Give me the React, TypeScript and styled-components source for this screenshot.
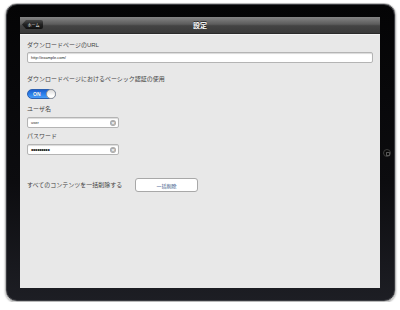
import React from "react";
import styled, { createGlobalStyle } from "styled-components";

const GlobalStyle = createGlobalStyle`
  html, body {
    margin: 0;
    padding: 0;
    background: #fff;
  }
  body {
    font-family: "Liberation Sans", "Noto Sans CJK JP", sans-serif;
  }
`;

const App: React.FC = () => {
  return (
    <>
      <GlobalStyle />
      <Frame>
        <HomeButton />
        <Screen>
          <NavBar>
            <BackButton>ホーム</BackButton>
            <NavTitle>設定</NavTitle>
          </NavBar>
          <Content>
            <Label>ダウンロードページのURL</Label>
            <Field $wide>
              <FieldText>http://example.com/</FieldText>
            </Field>

            <Label $gap={12}>ダウンロードページにおけるベーシック認証の使用</Label>
            <Toggle>
              <ToggleText>ON</ToggleText>
              <Knob />
            </Toggle>

            <Label $gap={6}>ユーザ名</Label>
            <Field>
              <FieldText>user</FieldText>
              <ClearIcon>×</ClearIcon>
            </Field>

            <Label $gap={4}>パスワード</Label>
            <Field>
              <FieldText $dots>•••••••••</FieldText>
              <ClearIcon>×</ClearIcon>
            </Field>

            <DeleteRow>
              <RowLabel>すべてのコンテンツを一括削除する</RowLabel>
              <DeleteButton>一括削除</DeleteButton>
            </DeleteRow>
          </Content>
        </Screen>
      </Frame>
    </>
  );
};
export default App;

//////////////////////////////////// frame

const Frame = styled.div`
  position: relative;
  box-sizing: border-box;
  width: 391px;
  height: 299px;
  margin: 3px 0 0 5px;
  padding: 13px 15px 13px 14px;
  border: 1px solid #b9b9b9;
  border-radius: 12px;
  background: linear-gradient(180deg, #040405 0%, #0c0c0f 60%, #1d1e24 100%);
  box-shadow: 0 1px 2px rgba(0, 0, 0, 0.35), inset 0 0 0 1px #3a3b40;
`;

const HomeButton = styled.div`
  position: absolute;
  right: 4px;
  top: 145px;
  width: 6px;
  height: 6px;
  border-radius: 50%;
  border: 1px solid #3c3c3c;
  background: #0a0a0a;
  &::after {
    content: "";
    position: absolute;
    left: 1.5px;
    top: 1.5px;
    width: 2px;
    height: 2px;
    border: 0.5px solid #555;
    border-radius: 0.5px;
  }
`;

const Screen = styled.div`
  display: flex;
  flex-direction: column;
  width: 100%;
  height: 100%;
  background: #e8e8e8;
  overflow: hidden;
`;

//////////////////////////////////// nav

const NavBar = styled.div`
  position: relative;
  display: flex;
  align-items: center;
  justify-content: center;
  height: 16px;
  flex-shrink: 0;
  background: linear-gradient(180deg, #858585 0%, #5c5c5c 45%, #434343 55%, #3a3a3a 100%);
  border-bottom: 1px solid #2a2a2a;
  box-shadow: 0 1px 0 #f4f4f4;
`;

const BackButton = styled.div`
  position: absolute;
  left: 2px;
  top: 3px;
  display: flex;
  align-items: center;
  justify-content: center;
  width: 21px;
  height: 9px;
  padding-left: 2px;
  box-sizing: border-box;
  font-size: 4px;
  color: #fff;
  background: linear-gradient(180deg, #4a4a4a 0%, #222 50%, #111 100%);
  clip-path: polygon(0 50%, 4px 0, 100% 0, 100% 100%, 4px 100%);
  border-radius: 0 2px 2px 0;
`;

const NavTitle = styled.div`
  font-size: 7px;
  font-weight: bold;
  color: #fff;
  text-shadow: 0 -1px 0 rgba(0, 0, 0, 0.6);
`;

//////////////////////////////////// content

const Content = styled.div`
  display: flex;
  flex-direction: column;
  align-items: flex-start;
  padding: 7px 7px 0 7px;
`;

const Label = styled.div<{ $gap?: number }>`
  margin-top: ${(p) => p.$gap ?? 0}px;
  font-size: 6px;
  line-height: 8px;
  color: #444;
  white-space: nowrap;
`;

const Field = styled.div<{ $wide?: boolean }>`
  display: flex;
  align-items: center;
  justify-content: space-between;
  box-sizing: border-box;
  width: ${(p) => (p.$wide ? "100%" : "92px")};
  height: 11px;
  margin-top: ${(p) => (p.$wide ? 3 : 4)}px;
  padding: 0 2px 0 3px;
  background: #fff;
  border: 1px solid #b4b4b4;
  border-radius: 2px;
  box-shadow: inset 0 1px 1px rgba(0, 0, 0, 0.15);
`;

const FieldText = styled.span<{ $dots?: boolean }>`
  font-size: ${(p) => (p.$dots ? "7px" : "4px")};
  line-height: 6px;
  letter-spacing: ${(p) => (p.$dots ? "-0.4px" : "0")};
  color: #222;
  white-space: nowrap;
`;

const ClearIcon = styled.span`
  display: flex;
  align-items: center;
  justify-content: center;
  width: 6px;
  height: 6px;
  border-radius: 50%;
  background: #a9a9a9;
  color: #fff;
  font-size: 6px;
  line-height: 6px;
  font-weight: bold;
`;

const Toggle = styled.div`
  position: relative;
  display: flex;
  align-items: center;
  box-sizing: border-box;
  width: 29px;
  height: 10px;
  margin-top: 6px;
  padding-left: 5px;
  border-radius: 5px;
  border: 1px solid #2a5fb0;
  background: linear-gradient(180deg, #1c5fcf 0%, #2f86f0 60%, #4b9cf5 100%);
`;

const ToggleText = styled.span`
  font-size: 5px;
  font-weight: bold;
  color: #fff;
  text-shadow: 0 -0.5px 0 rgba(0, 0, 0, 0.4);
`;

const Knob = styled.div`
  position: absolute;
  right: -1px;
  top: -1px;
  width: 10px;
  height: 10px;
  box-sizing: border-box;
  border-radius: 50%;
  border: 1px solid #9a9a9a;
  background: linear-gradient(180deg, #dcdcdc 0%, #fff 70%);
`;

const DeleteRow = styled.div`
  display: flex;
  align-items: center;
  margin-top: 23px;
`;

const RowLabel = styled.div`
  width: 108px;
  font-size: 6px;
  line-height: 8px;
  color: #444;
  white-space: nowrap;
`;

const DeleteButton = styled.div`
  display: flex;
  align-items: center;
  justify-content: center;
  width: 63px;
  height: 14px;
  box-sizing: border-box;
  border: 1px solid #a8a8a8;
  border-radius: 3px;
  background: #fff;
  font-size: 5px;
  color: #2f4f86;
`;
